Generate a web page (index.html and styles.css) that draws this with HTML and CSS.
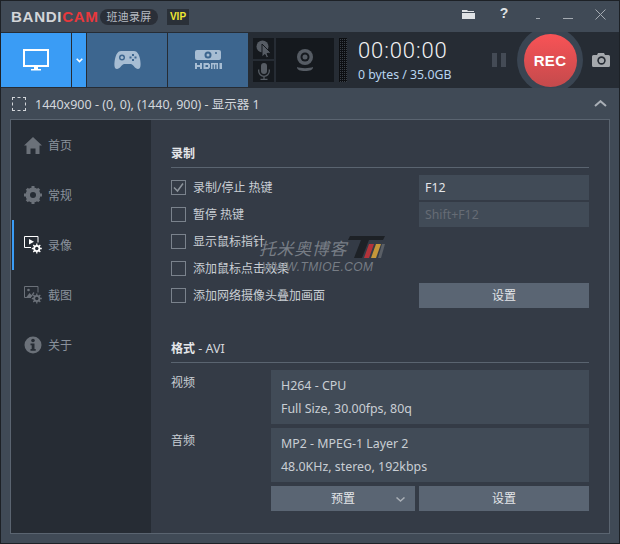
FILE: index.html
```html
<!DOCTYPE html>
<html lang="zh-CN">
<head>
    <meta charset="UTF-8">
    <title>Bandicam</title>
    <link rel="stylesheet" href="styles.css">
</head>
<body>
<div class="window">

    <div class="titlebar">
        <span class="logo">BANDI<b>CAM</b></span>
        <span class="pill">班迪录屏</span>
        <span class="vip">VIP</span>
        <div class="winbtns">
            <svg class="ic-folder" viewBox="0 0 13 10"><path d="M0 1h5l1 1h6v1H0zM0 4h13v6H0z" fill="#dfe2e5"/></svg>
            <span class="help">?</span>
            <span class="min-a"></span>
            <span class="min-b"></span>
            <svg class="ic-close" viewBox="0 0 11 11"><path d="M.5.5l10 10M10.5.5l-10 10" stroke="#a4aab1" fill="none"/></svg>
        </div>
    </div>

    <div class="toolbar">
        <div class="tab tab-screen">
            <svg width="26" height="22" viewBox="0 0 26 22"><path d="M1 1h24v16H1z" fill="none" stroke="#fff" stroke-width="2"/><path d="M11 18h4v2h-4zM8 20h10v1.500H8z" fill="#fff"/></svg>
        </div>
        <div class="tab tab-arrow">
            <svg width="7" height="5" viewBox="0 0 7 5"><path d="M.7.7l2.800 2.800L6.300.7" fill="none" stroke="#fff" stroke-width="1.600"/></svg>
        </div>
        <div class="tab tab-mode">
            <svg width="27" height="20" viewBox="0 0 27 20"><path d="M7 1h13c3 0 5 3 6 8 1 5 1 10-2 10-3 0-4-4-7-5h-7c-3 1-4 5-7 5-3 0-3-5-2-10 1-5 3-8 6-8z" fill="#a7bdd3"/><circle cx="8" cy="7.500" r="3" fill="#3d668f"/><circle cx="8" cy="7.500" r="1.500" fill="#a7bdd3"/><path d="M18 4h2v2h-2zM18 9h2v2h-2zM15.500 6.500h2v2h-2zM20.500 6.500h2v2h-2z" fill="#3d668f"/></svg>
        </div>
        <div class="tab tab-mode tab-hdmi">
            <svg width="27" height="20" viewBox="0 0 27 20"><rect y="0" width="26" height="10" rx="2" fill="#a7bdd3"/><circle cx="13" cy="5" r="3.500" fill="#3d668f"/><circle cx="13" cy="5" r="1.500" fill="#a7bdd3"/><circle cx="21" cy="3" r="1" fill="#3d668f"/><path d="M0 13h2v2h3v-2h2v6H5v-2H2v2H0zM8.500 13h5l1.500 1.500v3L13.500 19h-5zM10.500 15v2h2.500v-2zM16 13h7v6h-1.500v-4.500h-1.300V19h-1.400v-4.500h-1.300V19H16zM24.500 13H27v6h-2.500z" fill="#a7bdd3"/></svg>
        </div>
        <div class="srcbtns">
            <div class="srcbtn">
                <svg width="16" height="18" viewBox="0 0 16 18"><circle cx="6.500" cy="6.500" r="6" fill="#565c64"/><path d="M6 4l9 9-4 .5 1.500 3.500-2 1-1.500-3.500L6 17z" fill="#565c64" stroke="#15191e"/></svg>
            </div>
            <div class="srcbtn">
                <svg width="12" height="17" viewBox="0 0 12 17"><rect x="3" width="6" height="11" rx="3" fill="#565c64"/><path d="M.7 6.500v1.500a5.300 5.300 0 0 0 10.600 0V6.500M6 13.500V16M2.500 16.500h7" fill="none" stroke="#565c64" stroke-width="1.300"/></svg>
            </div>
        </div>
        <div class="webcam">
            <svg width="18" height="22" viewBox="0 0 18 22"><circle cx="9" cy="8" r="8" fill="#565c64"/><circle cx="9" cy="8" r="4.500" fill="#15191e"/><circle cx="9" cy="8" r="2.500" fill="#565c64"/><path d="M1 18c3 1.500 13 1.500 16 0 0 3-3 4-8 4s-8-1-8-4z" fill="#565c64"/></svg>
        </div>
        <div class="meter"></div>
        <div class="clock">
            <div class="time">00:00:00</div>
            <div class="bytes">0 bytes / 35.0GB</div>
        </div>
        <div class="pause"><i></i><i></i></div>
        <div class="rec-ring"><div class="rec">REC</div></div>
        <svg class="ic-camera" width="18" height="14" viewBox="0 0 18 14"><path d="M1.500 2H5l1-2h6l1 2h3.500A1.500 1.500 0 0 1 18 3.500v9a1.500 1.500 0 0 1-1.500 1.500h-15A1.500 1.500 0 0 1 0 12.500v-9A1.500 1.500 0 0 1 1.500 2z" fill="#a5a9ad"/><circle cx="9.500" cy="7.500" r="4.200" fill="#262c34"/><circle cx="9.500" cy="7.500" r="2.600" fill="#a5a9ad"/></svg>
    </div>

    <div class="selbar">
        <span class="dashbox"></span>
        <span class="seltext">1440x900 - (0, 0), (1440, 900) - 显示器 1</span>
        <svg class="ic-up" width="13" height="7" viewBox="0 0 13 7"><path d="M1 6l5.500-4.800L12 6" fill="none" stroke="#a9afb6" stroke-width="2"/></svg>
    </div>

    <div class="panel">
        <div class="sidebar">
            <div class="navitem">
                <svg width="18" height="17" viewBox="0 0 18 17"><path d="M9 0l9 8.500h-2.500V17h-4v-5.500h-5V17h-4V8.500H0z" fill="#6b7179"/></svg>
                <span>首页</span>
            </div>
            <div class="navitem">
                <svg width="18" height="18" viewBox="0 0 18 18"><circle cx="9" cy="9" r="5.500" fill="none" stroke="#6b7179" stroke-width="4"/><path d="M9 9L9 0M9 9L9 18M9 9L0 9M9 9L18 9M9 9L2.800 2.800M9 9l6.200 6.200M9 9l6.200-6.200M9 9l-6.200 6.200" stroke="#6b7179" stroke-width="3"/><circle cx="9" cy="9" r="3" fill="#262c34"/></svg>
                <span>常规</span>
            </div>
            <div class="navitem active">
                <svg width="18" height="18" viewBox="0 0 18 18"><path d="M7 11.500H.5V.5h13.500v6" fill="none" stroke="#fff"/><path d="M5 3l5 2.800-5 2.800z" fill="#fff"/><path d="M12.800 7.500v10M7.800 12.500h10M9.300 9l7 7M16.300 9l-7 7" stroke="#fff" stroke-width="1.300"/><circle cx="12.800" cy="12.500" r="3.500" fill="#fff"/><circle cx="12.800" cy="12.500" r="1.700" fill="#262c34"/></svg>
                <span>录像</span>
            </div>
            <div class="navitem">
                <svg width="18" height="18" viewBox="0 0 18 18"><path d="M7 11.500H.5V.5h13.500v6" fill="none" stroke="#6b7179"/><path d="M2.500 11l3-4 2 2 2-3 1 1-3 4z" fill="#6b7179"/><circle cx="4.500" cy="4" r="1.300" fill="#6b7179"/><path d="M12.800 7.500v10M7.800 12.500h10M9.300 9l7 7M16.300 9l-7 7" stroke="#6b7179" stroke-width="1.300"/><circle cx="12.800" cy="12.500" r="3.500" fill="#6b7179"/><circle cx="12.800" cy="12.500" r="1.700" fill="#262c34"/></svg>
                <span>截图</span>
            </div>
            <div class="navitem">
                <svg width="18" height="18" viewBox="0 0 18 18"><circle cx="9" cy="9" r="8.500" fill="#6b7179"/><circle cx="9" cy="4.500" r="1.800" fill="#262c34"/><path d="M6.500 7.500h4V13h1.200v1.800H6.500V13h1.200V9.300H6.500z" fill="#262c34"/></svg>
                <span>关于</span>
            </div>
        </div>

        <div class="content">
            <h2 class="heading">录制</h2>
            <div class="rec-grid">
                <label class="check"><span class="box">
                    <svg width="13" height="13" viewBox="0 0 13 13"><path d="M2 6.500l3.500 3.500L11 2.500" fill="none" stroke="#8d949c" stroke-width="1.500"/></svg>
                </span>录制/停止 热键</label>
                <div class="field">F12</div>
                <label class="check"><span class="box"></span>暂停 热键</label>
                <div class="field off">Shift+F12</div>
                <label class="check"><span class="box"></span>显示鼠标指针</label>
                <div></div>
                <label class="check"><span class="box"></span>添加鼠标点击效果</label>
                <div></div>
                <label class="check"><span class="box"></span>添加网络摄像头叠加画面</label>
                <div class="btn">设置</div>
            </div>

            <h2 class="heading heading-fmt">格式 <span>- AVI</span></h2>
            <div class="fmt-grid">
                <div class="fmt-label">视频</div>
                <div class="fmt-box">
                    <div>H264 - CPU</div>
                    <div>Full Size, 30.00fps, 80q</div>
                </div>
                <div class="fmt-label">音频</div>
                <div class="fmt-box">
                    <div>MP2 - MPEG-1 Layer 2</div>
                    <div>48.0KHz, stereo, 192kbps</div>
                </div>
                <div></div>
                <div class="fmt-btns">
                    <div class="btn btn-preset">预置
                        <svg width="9" height="5" viewBox="0 0 9 5"><path d="M.5.500l4 3.500 4-3.500" fill="none" stroke="#a9afb6" stroke-width="1.500"/></svg>
                    </div>
                    <div class="btn">设置</div>
                </div>
            </div>

            <div class="watermark">
                <div class="wm-cn">托米奥博客</div>
                <div class="wm-en">WWW.TMIOE.COM</div>
                <svg class="wm-logo" width="40" height="22" viewBox="0 0 40 22"><path d="M5 0h35l-2 4H24l-7 18h-8l7-18H3z" fill="#1d2126"/><path d="M19 22l5-14h5l-5 14z" fill="#b3333a"/><path d="M26 22l5-14h5l-5 14z" fill="#c4973a"/><path d="M33 22l4-14h3l-4 14z" fill="#5a5f66"/></svg>
            </div>
        </div>
    </div>
</div>
</body>
</html>
```

FILE: styles.css
```css
* {
    box-sizing: border-box;
}
html, body {
    margin: 0;
    height: 100%;
}
body {
    font-family: "Noto Sans", "Noto Sans CJK SC", sans-serif;
    font-size: 12px;
    color: #c9ced4;
    background: #404a56;
    overflow: hidden;
}
.window {
    width: 620px;
    height: 544px;
    border: 1px solid #1d2126;
    background: #404a56;
    display: flex;
    flex-direction: column;
}

/* title bar */
.titlebar {
    height: 31px;
    flex: none;
    display: flex;
    align-items: center;
    padding-left: 10px;
}
.logo {
    font-family: "Liberation Sans", sans-serif;
    font-size: 14px;
    font-weight: bold;
    letter-spacing: 0.6px;
    color: #d3d5d8;
    width: 89px;
    transform: scaleX(1.08);
    transform-origin: left center;
}
.logo b {
    color: #e8383c;
}
.pill {
    width: 58px;
    height: 16px;
    border-radius: 8px;
    background: #2a2f38;
    color: #b8bcc2;
    font-size: 11px;
    letter-spacing: 0.3px;
    line-height: 16px;
    text-align: center;
}
.vip {
    width: 22px;
    height: 16px;
    margin-left: 9px;
    background: #2a3038;
    color: #f0e832;
    font-family: "Liberation Sans", sans-serif;
    font-size: 10px;
    font-weight: bold;
    line-height: 16px;
    text-align: center;
}
.winbtns {
    margin-left: auto;
    display: flex;
    align-items: center;
    height: 100%;
}
.ic-folder {
    width: 13px;
    height: 10px;
    margin-top: -5px;
}
.help {
    width: 10px;
    margin-left: 24px;
    margin-top: -7px;
    color: #dfe2e5;
    font-family: "Liberation Sans", sans-serif;
    font-size: 14px;
    font-weight: bold;
    text-align: center;
}
.min-a {
    width: 4px;
    height: 1px;
    margin: 4px 0 0 27px;
    background: #a4aab1;
}
.min-b {
    width: 10px;
    height: 1px;
    margin: 4px 0 0 23px;
    background: #a4aab1;
}
.ic-close {
    width: 11px;
    height: 11px;
    margin: -5px 13px 0 22px;
}

/* toolbar */
.toolbar {
    height: 56px;
    flex: none;
    display: flex;
    align-items: center;
    background: #262c34;
    overflow: hidden;
}
.tab {
    height: 54px;
    display: flex;
    align-items: center;
    justify-content: center;
}
.tab-screen {
    width: 70px;
    background: #3a9cf5;
}
.tab-arrow {
    width: 14px;
    margin-left: 1px;
    background: #3a9cf5;
}
.tab-mode {
    width: 80px;
    margin-left: 1px;
    background: #3d668f;
}
.srcbtns {
    margin-left: 5px;
    display: flex;
    flex-direction: column;
    gap: 2px;
}
.srcbtn {
    width: 21px;
    height: 21px;
    background: #15191e;
    display: flex;
    align-items: center;
    justify-content: center;
}
.webcam {
    width: 58px;
    height: 44px;
    margin-left: 2px;
    background: #15191e;
    display: flex;
    align-items: center;
    justify-content: center;
}
.meter {
    width: 8px;
    height: 44px;
    margin-left: 5px;
    background-color: #3a4048;
    background-image: linear-gradient(#0d0f12 1px, transparent 1px), linear-gradient(90deg, #0d0f12 1px, transparent 1px);
    background-size: 2px 2px;
}
.clock {
    margin-left: 11px;
    width: 134px;
}
.time {
    font-family: Roboto, sans-serif;
    font-size: 22px;
    font-weight: 300;
    letter-spacing: 0.900px;
    line-height: 26px;
    color: #f2f3f4;
}
.bytes {
    margin-top: 3px;
    font-size: 12.300px;
    line-height: 16px;
    color: #b9d5f0;
}
.pause {
    display: flex;
    gap: 4px;
}
.pause i {
    width: 5px;
    height: 14px;
    background: #444b55;
}
.rec-ring {
    width: 66px;
    height: 66px;
    margin: -5px 0 -5px 11px;
    border-radius: 50%;
    background: #3a4552;
    display: flex;
    align-items: center;
    justify-content: center;
    flex: none;
}
.rec {
    width: 53px;
    height: 53px;
    border-radius: 50%;
    background: linear-gradient(#f85356, #c44a4c);
    color: #fff;
    font-family: "Liberation Sans", sans-serif;
    font-size: 15px;
    font-weight: bold;
    letter-spacing: 0.3px;
    line-height: 53px;
    text-align: center;
}
.ic-camera {
    margin-left: 9px;
}

/* selection row */
.selbar {
    height: 31px;
    flex: none;
    display: flex;
    align-items: center;
    padding-left: 11px;
}
.dashbox {
    width: 14px;
    height: 14px;
    border: 1px dashed #d3d6da;
}
.seltext {
    margin-left: 9px;
    font-size: 12.500px;
    color: #d3d7dc;
}
.ic-up {
    margin-left: auto;
    margin-right: 12px;
}

/* panel */
.panel {
    width: 600px;
    height: 415px;
    margin-left: 9px;
    border: 1px solid #5a6470;
    display: flex;
}
.sidebar {
    width: 140px;
    flex: none;
    background: #262c34;
}
.navitem {
    height: 50px;
    padding-left: 13px;
    display: flex;
    align-items: center;
    gap: 6px;
    color: #8a929c;
}
.navitem svg {
    width: 18px;
    flex: none;
}
.navitem span {
    padding-bottom: 1px;
}
.navitem.active {
    box-shadow: inset 2px 0 0 #3a9cf5;
    margin-left: 1px;
    padding-left: 12px;
}

/* content */
.content {
    flex: 1;
    background: #343b46;
    padding: 22px 20px 0;
    position: relative;
}
.heading {
    margin: 0;
    height: 26px;
    font-size: 12px;
    font-weight: bold;
    line-height: 23px;
    color: #e4e6e9;
    border-bottom: 1px solid #5a6470;
}
.heading span {
    font-weight: normal;
    font-size: 12.500px;
    color: #d3d7dc;
}
.heading-fmt {
    margin-top: 28px;
}
.rec-grid {
    margin-top: 6px;
    display: grid;
    grid-template-columns: 1fr 170px;
    grid-auto-rows: 27px;
    align-items: center;
}
.check {
    display: flex;
    align-items: center;
    gap: 7px;
    padding-bottom: 2px;
    color: #c9ced4;
}
.box {
    width: 15px;
    height: 15px;
    margin-top: 2px;
    border: 1px solid #7a828c;
    display: flex;
    align-items: center;
    justify-content: center;
}
.field {
    height: 25px;
    padding-left: 6px;
    background: #414b57;
    color: #e4e6e9;
    font-size: 12.300px;
    line-height: 25px;
}
.field.off {
    color: #666c75;
}
.btn {
    height: 25px;
    background: #5a6573;
    color: #e4e6e9;
    line-height: 25px;
    text-align: center;
}
.fmt-grid {
    margin-top: 7px;
    display: grid;
    grid-template-columns: 100px 318px;
    row-gap: 4px;
}
.fmt-label {
    padding-top: 3px;
    color: #c9ced4;
}
.fmt-box {
    height: 54px;
    padding: 4px 0 0 10px;
    background: #414b57;
    font-size: 12.400px;
    line-height: 23px;
    color: #c9ced4;
}
.fmt-btns {
    display: flex;
    gap: 4px;
}
.fmt-btns .btn {
    flex: 170;
}
.fmt-btns .btn-preset {
    flex: 0 0 144px;
    position: relative;
}
.btn-preset svg {
    position: absolute;
    right: 10px;
    top: 11px;
}

/* watermark over the options */
.watermark {
    position: absolute;
    left: 108px;
    top: 118px;
    width: 130px;
    height: 40px;
    color: #777d85;
    font-style: italic;
    pointer-events: none;
}
.wm-cn {
    font-size: 17px;
    line-height: 22px;
    letter-spacing: 0.6px;
}
.wm-en {
    margin-left: 3px;
    font-family: "Liberation Sans", sans-serif;
    font-size: 12px;
    line-height: 15px;
    letter-spacing: 0.4px;
}
.wm-logo {
    position: absolute;
    left: 86px;
    top: -2px;
}
```
